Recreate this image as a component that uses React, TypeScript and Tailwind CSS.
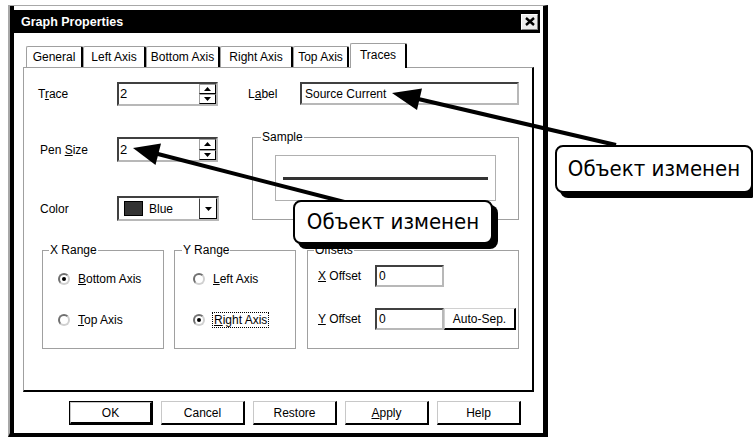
import React from "react";

const Mn = ({ children }: { children: React.ReactNode }) => <span className="underline underline-offset-[1px]">{children}</span>;

const sunken = "border-2 border-t-[#404040] border-l-[#404040] border-r-[#b8b8b8] border-b-[#b8b8b8] bg-white";

function Tri({ down }: { down?: boolean }) {
  return (
    <svg width="7" height="4" viewBox="0 0 7 4">
      <path d={down ? "M0 0 L7 0 L3.5 4 Z" : "M0 4 L7 4 L3.5 0 Z"} fill="#000" />
    </svg>
  );
}

function Spin({ value, h }: { value: string; h: string }) {
  return (
    <div className={`flex w-[101px] ${h} ${sunken}`}>
      <div className="flex-1 pl-[1px] flex items-center text-[13px]">{value}</div>
      <div className="flex flex-col w-[17px]">
        <div className="flex-1 flex items-center justify-center border border-[#a0a0a0] border-r-black border-b-black">
          <Tri />
        </div>
        <div className="flex-1 flex items-center justify-center border border-[#a0a0a0] border-r-black border-b-black">
          <Tri down />
        </div>
      </div>
    </div>
  );
}

function Radio({ checked, label, focus }: { checked?: boolean; label: React.ReactNode; focus?: boolean }) {
  return (
    <div className="flex items-center h-[16px]">
      <span className="w-[12px] h-[12px] rounded-full border-2 border-t-[#707070] border-l-[#707070] border-r-[#d0d0d0] border-b-[#d0d0d0] bg-white flex items-center justify-center">
        {checked && <span className="w-[4px] h-[4px] rounded-full bg-black" />}
      </span>
      <span className={focus ? "ml-[7px] border border-dotted border-black px-[1px]" : "ml-[8px]"}>{label}</span>
    </div>
  );
}

function Btn({ children, def }: { children: React.ReactNode; def?: boolean }) {
  return (
    <div className={`w-[84px] h-[24px] ${def ? "border border-black" : ""}`}>
      <div className="h-full flex items-center justify-center border border-t-[#c8c8c8] border-l-[#c8c8c8] border-r-black border-b-black border-b-2 border-r-2">
        {children}
      </div>
    </div>
  );
}

const tabs = [
  { t: "General", w: "w-[57px]" },
  { t: "Left Axis", w: "w-[63px]" },
  { t: "Bottom Axis", w: "w-[74px]" },
  { t: "Right Axis", w: "w-[73px]" },
  { t: "Top Axis", w: "w-[56px]" },
];

export default function App() {
  return (
    <div className="relative w-[753px] h-[439px] overflow-hidden bg-white pt-[5px] pl-[8px] font-['Liberation_Sans',Arial,sans-serif] text-[12px] leading-[14px] text-black">
      <div className="w-[540px] h-[432px] border-t border-l-2 border-t-[#a8a8a8] border-l-[#a8a8a8] border-r-[5px] border-b-4 border-r-black border-b-black">
        <div className="h-full border-l-4 border-black pt-[4px] pr-[3px] flex flex-col">
          {/* title bar */}
          <div className="h-[23px] bg-black flex items-center justify-between pl-[7px] pr-[2px]">
            <span className="text-white font-bold text-[12.5px]">Graph Properties</span>
            <div className="w-[17px] h-[16px] bg-[#ececec] border border-t-white border-l-white border-r-[#808080] border-b-[#808080] flex items-center justify-center">
              <svg width="10" height="9" viewBox="0 0 10 9">
                <path d="M1 1 L9 8 M9 1 L1 8" stroke="#000" strokeWidth="2.4" />
              </svg>
            </div>
          </div>

          {/* tabs */}
          <div className="mt-[10px] ml-[12px] flex items-end h-[24px]">
            {tabs.map((tb) => (
              <div
                key={tb.t}
                className={`${tb.w} h-[21px] flex items-center justify-center border-t border-l border-[#a0a0a0] border-r-2 border-r-black rounded-t-[2px]`}
              >
                {tb.t}
              </div>
            ))}
            <div className="relative z-10 -mb-px ml-[1px] w-[57px] h-[25px] pb-[2px] flex items-center justify-center bg-white border-t border-l border-[#a0a0a0] border-r-2 border-r-black rounded-t-[2px]">
              Traces
            </div>
          </div>

          {/* tab panel */}
          <div className="w-[511px] h-[325px] ml-[9px] border-t border-l border-[#a0a0a0] border-r-2 border-b-2 border-r-black border-b-black">
            <div className="flex pt-[14px]">
              <div className="w-[224px] flex flex-col">
                <div className="flex items-center h-[24px]">
                  <span className="w-[93px] pl-[14px]">
                    T<Mn>r</Mn>ace
                  </span>
                  <Spin value="2" h="h-[24px]" />
                </div>
                <div className="flex items-center h-[25px] mt-[31px]">
                  <span className="w-[93px] pl-[16px]">
                    Pen <Mn>S</Mn>ize
                  </span>
                  <Spin value="2" h="h-[25px]" />
                </div>
                <div className="flex items-center h-[25px] mt-[34px]">
                  <span className="w-[93px] pl-[16px]">Color</span>
                  <div className={`flex w-[102px] h-[25px] ${sunken}`}>
                    <div className="flex-1 flex items-center">
                      <span className="ml-[5px] w-[19px] h-[15px] bg-[#333] border border-black" />
                      <span className="ml-[6px]">Blue</span>
                    </div>
                    <div className="w-[18px] flex items-center justify-center border border-l-[#404040] border-t-white border-r-black border-b-black">
                      <Tri down />
                    </div>
                  </div>
                </div>
              </div>

              <div className="flex flex-col">
                <div className="flex items-center h-[23px]">
                  <span className="w-[52px]">
                    L<Mn>a</Mn>bel
                  </span>
                  <div className={`w-[219px] h-[23px] flex items-center pl-[3px] ${sunken}`}>Source Current</div>
                </div>
                <fieldset className="mt-[25px] ml-[4px] w-[267px] h-[90px] border border-[#a0a0a0]">
                  <legend className="ml-[8px] px-[1px] leading-[14px]">Sample</legend>
                  <div className="mt-[11px] ml-[22px] w-[221px] h-[46px] border border-[#b0b0b0] flex items-center px-[7px]">
                    <div className="w-full h-[3px] bg-[#333]" />
                  </div>
                </fieldset>
              </div>
            </div>

            {/* range groups */}
            <div className="flex mt-[22px] pl-[18px]">
              <fieldset className="w-[122px] h-[106px] border border-[#a0a0a0]">
                <legend className="ml-[6px] px-[1px] leading-[14px]">X Range</legend>
                <div className="pl-[15px]">
                  <div className="mt-[14px]">
                    <Radio checked label={<><Mn>B</Mn>ottom Axis</>} />
                  </div>
                  <div className="mt-[25px]">
                    <Radio label={<><Mn>T</Mn>op Axis</>} />
                  </div>
                </div>
              </fieldset>
              <fieldset className="ml-[10px] w-[122px] h-[106px] border border-[#a0a0a0]">
                <legend className="ml-[7px] px-[1px] leading-[14px]">Y Range</legend>
                <div className="pl-[18px]">
                  <div className="mt-[14px]">
                    <Radio label={<><Mn>L</Mn>eft Axis</>} />
                  </div>
                  <div className="mt-[25px]">
                    <Radio checked focus label={<><Mn>R</Mn>ight Axis</>} />
                  </div>
                </div>
              </fieldset>
              <fieldset className="ml-[11px] w-[212px] h-[106px] border border-[#a0a0a0]">
                <legend className="ml-[6px] px-[1px] leading-[14px]">Offsets</legend>
                <div className="mt-[8px] flex items-center h-[22px]">
                  <span className="w-[67px] pl-[10px]">
                    <Mn>X</Mn> Offset
                  </span>
                  <div className={`w-[69px] h-[22px] flex items-center pl-[2px] ${sunken}`}>0</div>
                </div>
                <div className="mt-[21px] flex items-center h-[22px]">
                  <span className="w-[67px] pl-[10px]">
                    <Mn>Y</Mn> Offset
                  </span>
                  <div className={`w-[69px] h-[22px] flex items-center pl-[2px] ${sunken}`}>0</div>
                  <div className="w-[72px] h-[22px] flex items-center justify-center border border-t-[#d0d0d0] border-l-[#d0d0d0] border-r-2 border-b-2 border-r-black border-b-black">
                    Auto-Sep.
                  </div>
                </div>
              </fieldset>
            </div>
          </div>

          {/* buttons */}
          <div className="mt-[9px] ml-[55px] flex gap-[8px]">
            <Btn def>OK</Btn>
            <Btn>Cancel</Btn>
            <Btn>Restore</Btn>
            <Btn>
              <Mn>A</Mn>pply
            </Btn>
            <Btn>Help</Btn>
          </div>
        </div>
      </div>

      {/* annotation arrows */}
      <svg className="absolute left-0 top-0 pointer-events-none" width="753" height="439">
        <line x1="616" y1="145" x2="414" y2="98" stroke="#000" strokeWidth="4" />
        <polygon points="392,93 417,110 422,88.5" fill="#000" />
        <line x1="360" y1="206" x2="154" y2="153" stroke="#000" strokeWidth="4" />
        <polygon points="133,148 155.5,165 161,143.6" fill="#000" />
      </svg>

      {/* callouts */}
      <div className="absolute left-[293px] top-[200px] w-[200px] h-[44px] flex items-center justify-center bg-white border-2 border-black rounded-[8px] shadow-[5px_5px_0_0_#000] font-['DejaVu_Sans_Condensed','DejaVu_Sans',sans-serif] text-[22px] leading-none">
        Объект изменен
      </div>
      <div className="absolute left-[555px] top-[145px] w-[198px] h-[48px] flex items-center justify-center bg-white border-2 border-black rounded-[8px] shadow-[5px_5px_0_0_#000] font-['DejaVu_Sans_Condensed','DejaVu_Sans',sans-serif] text-[22px] leading-none">
        Объект изменен
      </div>
    </div>
  );
}
